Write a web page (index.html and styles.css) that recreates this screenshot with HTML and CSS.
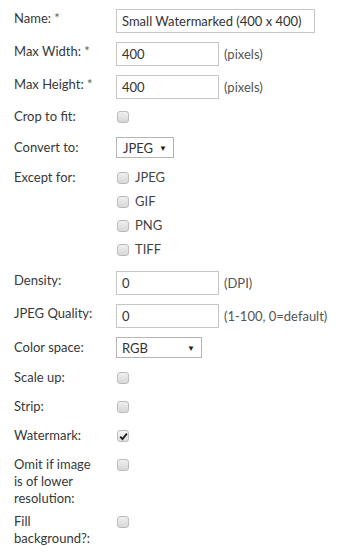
FILE: index.html
```html
<!DOCTYPE html>
<html lang="en">
<head>
  <meta charset="UTF-8" />
  <meta name="viewport" content="width=device-width, initial-scale=1" />
  <title>Image Style</title>
  <link rel="stylesheet" href="styles.css">
</head>
<body>
  <form class="style-form">
    <div class="row row-input">
      <label class="label">Name: <span class="req">*</span></label>
      <input class="text wide" type="text" value="Small Watermarked (400 x 400)" />
    </div>
    <div class="row row-input">
      <label class="label">Max Width: <span class="req">*</span></label>
      <input class="text" type="text" value="400" />
      <span class="unit">(pixels)</span>
    </div>
    <div class="row row-input last-input">
      <label class="label">Max Height: <span class="req">*</span></label>
      <input class="text" type="text" value="400" />
      <span class="unit">(pixels)</span>
    </div>
    <div class="row row-check">
      <label class="label">Crop to fit:</label>
      <span class="box"></span>
    </div>
    <div class="row row-select">
      <label class="label">Convert to:</label>
      <div class="select short">JPEG <span class="arrow">&#9660;</span></div>
    </div>
    <div class="row row-group">
      <label class="label">Except for:</label>
      <div class="options">
        <div class="option"><span class="box"></span>JPEG</div>
        <div class="option"><span class="box"></span>GIF</div>
        <div class="option"><span class="box"></span>PNG</div>
        <div class="option"><span class="box"></span>TIFF</div>
      </div>
    </div>
    <div class="row row-input">
      <label class="label">Density:</label>
      <input class="text" type="text" value="0" />
      <span class="unit">(DPI)</span>
    </div>
    <div class="row row-input last-input">
      <label class="label">JPEG Quality:</label>
      <input class="text" type="text" value="0" />
      <span class="unit">(1-100, 0=default)</span>
    </div>
    <div class="row row-select">
      <label class="label">Color space:</label>
      <div class="select long">RGB <span class="arrow">&#9660;</span></div>
    </div>
    <div class="row row-check">
      <label class="label">Scale up:</label>
      <span class="box"></span>
    </div>
    <div class="row row-check">
      <label class="label">Strip:</label>
      <span class="box"></span>
    </div>
    <div class="row row-check">
      <label class="label">Watermark:</label>
      <span class="box checked">
        <svg width="9" height="9" viewBox="0 0 9 9"><path d="M1.2 4.6 L3.5 7 L7.9 1.6" fill="none" stroke="#222" stroke-width="1.9"/></svg>
      </span>
    </div>
    <div class="row row-check tight">
      <label class="label">Omit if image is of lower resolution:</label>
      <span class="box"></span>
    </div>
    <div class="row row-check">
      <label class="label">Fill background?:</label>
      <span class="box"></span>
    </div>
  </form>
</body>
</html>
```

FILE: styles.css
```css
body {
  margin: 0;
  background: #fff;
  font-family: Lato, "Open Sans", sans-serif;
  font-size: 13px;
  color: #383838;
}
.style-form {
  padding: 9px 0 0 14px;
}
.row {
  display: flex;
  align-items: flex-start;
}
.label {
  width: 88px;
  margin-right: 14px;
  line-height: 17px;
  flex-shrink: 0;
}
.req {
  color: #4f6b4f;
}
.row-input {
  margin-bottom: 9px;
}
.row-input .label {
  padding-top: 1px;
}
.row-input.last-input {
  margin-bottom: 9px;
}
.text {
  box-sizing: border-box;
  width: 103px;
  height: 24px;
  border: 1px solid #c6c6c6;
  padding: 0 5px;
  margin: 0;
  font-family: inherit;
  font-size: 13px;
  color: #333;
  outline: none;
}
.text.wide {
  width: 199px;
}
.unit {
  margin-left: 5px;
  line-height: 24px;
  color: #555;
}
.row-check {
  margin-bottom: 12px;
}
.row-check.tight {
  margin-bottom: 6px;
}
.row-check .box {
  margin-top: 3px;
}
.box {
  box-sizing: border-box;
  display: inline-flex;
  align-items: center;
  justify-content: center;
  width: 12px;
  height: 12px;
  border: 1px solid #bcbcbc;
  border-radius: 3px;
  background: linear-gradient(#f0f0f0, #d6d6d6);
  margin-left: 1px;
}
.box.checked {
  background: linear-gradient(#f6f6f6, #e0e0e0);
}
.row-select {
  margin-bottom: 11px;
}
.row-select .label {
  padding-top: 2px;
}
.select {
  box-sizing: border-box;
  display: flex;
  align-items: center;
  justify-content: space-between;
  height: 21px;
  border: 1px solid #b5b5b5;
  padding: 0 6px;
  color: #333;
}
.select.short {
  width: 58px;
}
.select.long {
  width: 86px;
  padding-left: 5px;
}
.arrow {
  font-size: 8px;
  color: #222;
}
.row-group {
  margin-bottom: 13px;
}
.options {
  display: flex;
  flex-direction: column;
  gap: 7px;
}
.option {
  display: flex;
  align-items: center;
  line-height: 17px;
  color: #444;
}
.option .box {
  margin-right: 6px;
}
```
